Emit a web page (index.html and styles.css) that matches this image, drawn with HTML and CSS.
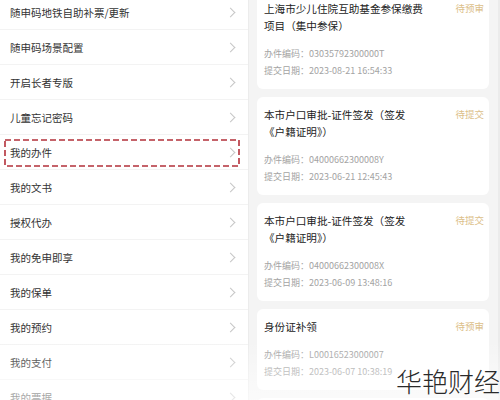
FILE: index.html
```html
<!DOCTYPE html>
<html lang="zh-CN">
<head>
    <meta charset="UTF-8">
    <meta name="viewport" content="width=device-width, initial-scale=1.0">
    <title>我的办件</title>
    <link rel="stylesheet" href="styles.css">
</head>
<body>
    <div class="screen">
        <ul class="menu">
            <li class="menu-item">随申码地铁自助补票/更新<span class="chev"></span></li>
            <li class="menu-item">随申码场景配置<span class="chev"></span></li>
            <li class="menu-item">开启长者专版<span class="chev"></span></li>
            <li class="menu-item">儿童忘记密码<span class="chev"></span></li>
            <li class="menu-item marked">我的办件<span class="chev"></span>
                <svg class="mark" width="236" height="28" viewBox="0 0 236 28">
                    <rect x="1" y="1" width="234" height="26" fill="none" stroke="#b3303a" stroke-width="1.6" stroke-dasharray="6 3"/>
                </svg>
            </li>
            <li class="menu-item">我的文书<span class="chev"></span></li>
            <li class="menu-item">授权代办<span class="chev"></span></li>
            <li class="menu-item">我的免申即享<span class="chev"></span></li>
            <li class="menu-item">我的保单<span class="chev"></span></li>
            <li class="menu-item">我的预约<span class="chev"></span></li>
            <li class="menu-item">我的支付<span class="chev"></span></li>
            <li class="menu-item">我的票据<span class="chev"></span></li>
        </ul>

        <div class="orders">
            <div class="card">
                <div class="card-head">
                    <div class="card-title">上海市少儿住院互助基金参保缴费项目（集中参保）</div>
                    <span class="status">待预审</span>
                </div>
                <p class="meta">办件编码：03035792300000T</p>
                <p class="meta">提交日期：2023-08-21 16:54:33</p>
            </div>
            <div class="card">
                <div class="card-head">
                    <div class="card-title">本市户口审批-证件签发（签发《户籍证明》）</div>
                    <span class="status">待提交</span>
                </div>
                <p class="meta">办件编码：04000662300008Y</p>
                <p class="meta">提交日期：2023-06-21 12:45:43</p>
            </div>
            <div class="card">
                <div class="card-head">
                    <div class="card-title">本市户口审批-证件签发（签发《户籍证明》）</div>
                    <span class="status">待提交</span>
                </div>
                <p class="meta">办件编码：04000662300008X</p>
                <p class="meta">提交日期：2023-06-09 13:48:16</p>
            </div>
            <div class="card">
                <div class="card-head">
                    <div class="card-title">身份证补领</div>
                    <span class="status">待预审</span>
                </div>
                <p class="meta">办件编码：L00016523000007</p>
                <p class="meta">提交日期：2023-06-07 10:38:19</p>
            </div>
            <div class="card"></div>
        </div>

        <div class="fade"></div>
        <div class="watermark">华艳财经</div>
    </div>
</body>
</html>
```

FILE: styles.css
```css
body {
    margin: 0;
    font-family: "Noto Sans CJK SC", "Noto Sans", sans-serif;
    color: #333;
}
.screen {
    position: relative;
    display: flex;
    width: 500px;
    height: 400px;
    overflow: hidden;
    background: #f4f4f4;
}
.menu {
    list-style: none;
    margin: -5px 0 0;
    padding: 0;
    width: 248px;
    flex-shrink: 0;
    background: #fff;
    border-right: 1px solid #ececec;
}
.menu-item {
    position: relative;
    display: flex;
    align-items: center;
    justify-content: space-between;
    height: 34px;
    padding: 0 14px 0 10px;
    border-bottom: 1px solid #f3f3f3;
    font-size: 10.5px;
    color: #333;
}
.chev {
    width: 6px;
    height: 6px;
    border-top: 1px solid #c6c6c6;
    border-right: 1px solid #c6c6c6;
    transform: rotate(45deg);
}
.mark {
    position: absolute;
    left: 4px;
    top: 4px;
}
.orders {
    flex: 1;
    display: flex;
    flex-direction: column;
    gap: 8px;
    margin-top: -9px;
    padding: 0 9px 0 8px;
    border-right: 2px solid #ebebeb;
}
.card {
    background: #fff;
    border-radius: 6px;
    padding: 9px 5px 10px 7px;
    flex-shrink: 0;
}
.card-head {
    display: flex;
    justify-content: space-between;
    align-items: flex-start;
}
.card-title {
    flex: 1;
    max-width: 161px;
    font-size: 10.6px;
    line-height: 17px;
    color: #222;
}
.status {
    font-size: 9.5px;
    line-height: 17px;
    color: #dcc08a;
}
.meta {
    margin: 0;
    font-size: 9px;
    line-height: 17px;
    color: #a3a3a3;
}
.card-head + .meta {
    margin-top: 11px;
}
.fade {
    position: absolute;
    left: 0;
    right: 0;
    bottom: 0;
    height: 60px;
    background: linear-gradient(to bottom, rgba(255,255,255,0), rgba(255,255,255,0.6));
}
.watermark {
    position: absolute;
    right: 0;
    bottom: 2px;
    font-family: "Noto Sans CJK SC Light", "Noto Sans CJK SC DemiLight", "Noto Sans CJK SC", sans-serif;
    font-size: 26px;
    font-weight: 200;
    line-height: 34px;
    color: #2a2a2a;
}
```
